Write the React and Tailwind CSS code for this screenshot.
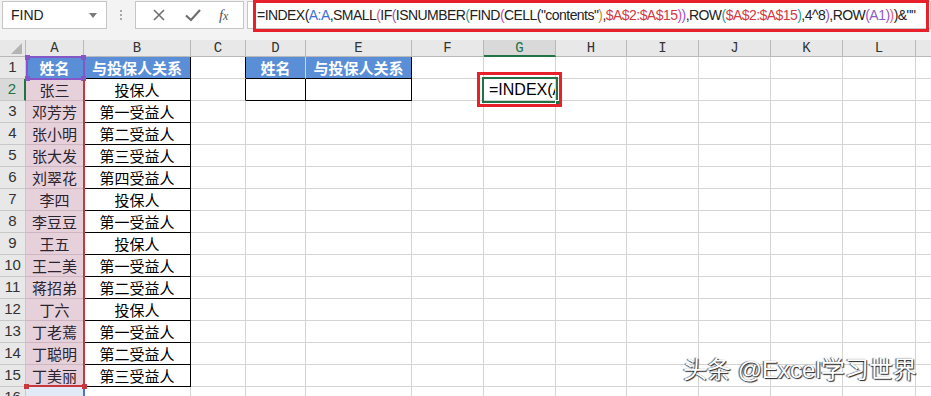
import React from 'react';

const cols = [
  { key: 'A', w: 'w-[58px]' },
  { key: 'B', w: 'w-[107px]' },
  { key: 'C', w: 'w-[55px]' },
  { key: 'D', w: 'w-[60px]' },
  { key: 'E', w: 'w-[106px]' },
  { key: 'F', w: 'w-[72px]' },
  { key: 'G', w: 'w-[72px]' },
  { key: 'H', w: 'w-[71px]' },
  { key: 'I', w: 'w-[72px]' },
  { key: 'J', w: 'w-[72px]' },
  { key: 'K', w: 'w-[72px]' },
  { key: 'L', w: 'w-[73px]' },
  { key: 'M', w: 'w-[40px]' },
];

const names = ['张三', '邓芳芳', '张小明', '张大发', '刘翠花', '李四', '李豆豆', '王五', '王二美', '蒋招弟', '丁六', '丁老蔫', '丁聪明', '丁美丽'];
const rels = ['投保人', '第一受益人', '第二受益人', '第三受益人', '第四受益人', '投保人', '第一受益人', '投保人', '第一受益人', '第二受益人', '投保人', '第一受益人', '第二受益人', '第三受益人'];

const formula = [
  ['=INDEX(', 'text-[#222]'],
  ['A:A', 'text-[#3b6fd4]'],
  [',SMALL', 'text-[#222]'],
  ['(', 'text-[#e0617a]'],
  ['IF', 'text-[#222]'],
  ['(', 'text-[#9a52c8]'],
  ['ISNUMBER', 'text-[#222]'],
  ['(', 'text-[#1aa39a]'],
  ['FIND', 'text-[#222]'],
  ['(', 'text-[#c94bb8]'],
  ['CELL(', 'text-[#222]'],
  ['"contents"', 'text-[#222]'],
  [')', 'text-[#e6842a]'],
  [',', 'text-[#222]'],
  ['$A$2:$A$15', 'text-[#d2393f]'],
  [')', 'text-[#c94bb8]'],
  [')', 'text-[#9a52c8]'],
  [',ROW', 'text-[#222]'],
  ['(', 'text-[#1aa39a]'],
  ['$A$2:$A$15', 'text-[#d2393f]'],
  [')', 'text-[#1aa39a]'],
  [',4^8', 'text-[#222]'],
  [')', 'text-[#9a52c8]'],
  [',ROW', 'text-[#222]'],
  ['(', 'text-[#9a52c8]'],
  ['A1', 'text-[#8a5cc8]'],
  [')', 'text-[#9a52c8]'],
  [')', 'text-[#e0617a]'],
  [')&""', 'text-[#222]'],
];

function cellStyle(r, c) {
  // r: 1-based row, c: column key
  let cls = 'border-r border-b border-[#d4d4d4]';
  let text = '';
  const header = 'bg-[#5a8fd7] text-white font-bold';
  if (c === 'A') {
    if (r === 1) { cls = 'border-r border-b border-[#d4d4d4] ' + header; text = '姓名'; }
    else if (r <= 15) { cls = 'border-r border-b border-[#cdb6c2] bg-[#e6d0da] text-[#2a2430]'; text = names[r - 2]; }
    else cls = 'border-r border-b border-[#c9d6ec] bg-[#e2eaf7]';
  }
  if (c === 'B' && r <= 15) {
    if (r === 1) { cls = 'border-r border-b border-black ' + header; text = '与投保人关系'; }
    else { cls = 'border-r border-b border-black bg-white text-black'; text = rels[r - 2]; }
  }
  if (c === 'C' && r <= 2) cls = 'border-r border-b border-r-black border-b-[#d4d4d4]';
  if (c === 'D' && r === 1) { cls = 'border-r border-b border-r-[#c7d6ee] border-b-black ' + header; text = '姓名'; }
  if (c === 'E' && r === 1) { cls = 'border-r border-b border-black ' + header; text = '与投保人关系'; }
  if ((c === 'D' || c === 'E') && r === 2) cls = 'border-r border-b border-black bg-white';
  return { cls, text };
}

function XIcon() {
  return (
    <svg width="16" height="16" viewBox="0 0 16 16">
      <path d="M3 3 L13 13 M13 3 L3 13" stroke="#6f6f6f" strokeWidth="1.6" />
    </svg>
  );
}

function CheckIcon() {
  return (
    <svg width="18" height="16" viewBox="0 0 18 16">
      <path d="M2 8.5 L7 13 L16 3" stroke="#6f6f6f" strokeWidth="2.2" fill="none" />
    </svg>
  );
}

export default function App() {
  const rows = Array.from({ length: 16 }, (_, i) => i + 1);

  return (
    <div className="relative w-[931px] h-[396px] overflow-hidden bg-[#f3f3f3] font-['Liberation_Sans',sans-serif]">
      {/* formula bar */}
      <div className="flex h-[40px] items-start pt-[1px]">
        <div className="ml-[2px] flex h-[28px] w-[105px] shrink-0 items-center justify-between border border-[#c6c6c6] bg-white pl-[8px] pr-[9px]">
          <span className="text-[14px] text-[#222]">FIND</span>
          <span className="h-0 w-0 border-x-[4px] border-t-[5px] border-x-transparent border-t-[#7a7a7a]" />
        </div>
        <div className="flex w-[28px] shrink-0 flex-col items-center gap-[2px] pt-[9px]">
          <span className="h-[2px] w-[2px] bg-[#a8a8a8]" />
          <span className="h-[2px] w-[2px] bg-[#a8a8a8]" />
          <span className="h-[2px] w-[2px] bg-[#a8a8a8]" />
        </div>
        <div className="flex h-[28px] w-[109px] shrink-0 items-center justify-around border border-[#c6c6c6] bg-white px-[6px]">
          <XIcon />
          <CheckIcon />
          <span className="font-['Liberation_Serif',serif] text-[15px] italic text-[#555]">f<span className="text-[12px]">x</span></span>
        </div>
        <div className="relative ml-[3px] h-[28px] min-w-0 flex-1 border border-[#c6c6c6] bg-white">
          <div className="absolute left-[5px] top-[-2px] right-[1px] h-[32px] border-[3px] border-[#e8202a]" />
          <div className="overflow-hidden whitespace-nowrap pl-[9px] pt-[4px] text-[14px] leading-[18px] tracking-[-0.55px]">
            {formula.map(([t, c], i) => (
              <span key={i} className={c}>{t}</span>
            ))}
          </div>
        </div>
      </div>

      {/* sheet */}
      <div className="bg-white">
        <div className="flex h-[17px] bg-[#e8e8e8]">
          <div className="relative w-[26px] shrink-0 border-r border-b border-[#b9b9b9]">
            <span className="absolute bottom-[2px] right-[3px] h-0 w-0 border-b-[11px] border-l-[11px] border-b-[#b4b4b4] border-l-transparent" />
          </div>
          {cols.map(({ key, w }) => (
            <div
              key={key}
              className={`${w} shrink-0 flex items-center justify-center font-['Liberation_Mono',monospace] text-[14px] leading-none ${
                key === 'G'
                  ? 'border-r border-r-[#b9b9b9] border-b-2 border-b-[#217346] bg-[#d9d9d9] text-[#217346]'
                  : 'border-r border-b border-[#b9b9b9] text-[#333]'
              }`}
            >
              {key === 'M' ? '' : key}
            </div>
          ))}
        </div>

        {rows.map((r) => (
          <div key={r} className="flex h-[22px]">
            <div
              className={`w-[26px] shrink-0 flex items-center justify-center text-[15px] ${
                r === 2
                  ? 'border-b border-b-[#c8c8c8] border-r-2 border-r-[#217346] bg-[#d9d9d9] text-[#217346]'
                  : 'border-r border-b border-[#c8c8c8] bg-[#e8e8e8] text-[#333]'
              }`}
            >
              {r}
            </div>
            {cols.map(({ key, w }) => {
              const { cls, text } = cellStyle(r, key);
              return (
                <div
                  key={key}
                  className={`${w} ${cls} shrink-0 flex items-center justify-center overflow-hidden whitespace-nowrap font-['Noto_Sans_CJK_SC',sans-serif] text-[15px] leading-none`}
                >
                  {key === 'G' && r === 2 ? (
                    <span className="w-full pl-[5px] font-['Liberation_Sans',sans-serif] text-[16px] text-black">=INDEX(A</span>
                  ) : (
                    text
                  )}
                </div>
              );
            })}
          </div>
        ))}
      </div>

      {/* reference highlights */}
      <div className="absolute left-[26px] top-[56px] h-[24px] w-[59px] border-2 border-[#8456c6]">
        <span className="absolute -left-[3px] -top-[3px] h-[5px] w-[5px] bg-[#8456c6]" />
        <span className="absolute -right-[3px] -top-[3px] h-[5px] w-[5px] bg-[#8456c6]" />
        <span className="absolute -left-[3px] -bottom-[3px] h-[5px] w-[5px] bg-[#8456c6]" />
        <span className="absolute -right-[3px] -bottom-[3px] h-[5px] w-[5px] bg-[#8456c6]" />
      </div>
      <div className="absolute left-[26px] top-[80px] h-[307px] w-[59px] border-r-2 border-b-2 border-[#c8373e]">
        <span className="absolute -left-[2px] -bottom-[4px] h-[5px] w-[5px] bg-[#c8373e]" />
        <span className="absolute -right-[4px] -bottom-[4px] h-[5px] w-[5px] bg-[#c8373e]" />
      </div>
      <div className="absolute left-[83px] top-[389px] h-[10px] w-[2px] bg-[#4a78c8]" />

      {/* active cell G2 */}
      <div className="absolute left-[482px] top-[77px] h-[26px] w-[76px] border-2 border-[#217346]">
        <span className="absolute -right-[4px] -bottom-[4px] h-[5px] w-[5px] border border-white bg-[#217346]" />
      </div>
      <div className="absolute left-[477px] top-[72px] h-[35px] w-[85px] border-[3px] border-[#e8202a]" />

      {/* watermark */}
      <div className="absolute left-[683px] top-[356px] whitespace-nowrap font-['Liberation_Sans','Noto_Sans_CJK_SC',sans-serif] text-[24px] leading-[28px] text-white [text-shadow:1px_1px_1px_#222,-1px_0_1px_#444]">
        头条 @Excel学习世界
      </div>
    </div>
  );
}
